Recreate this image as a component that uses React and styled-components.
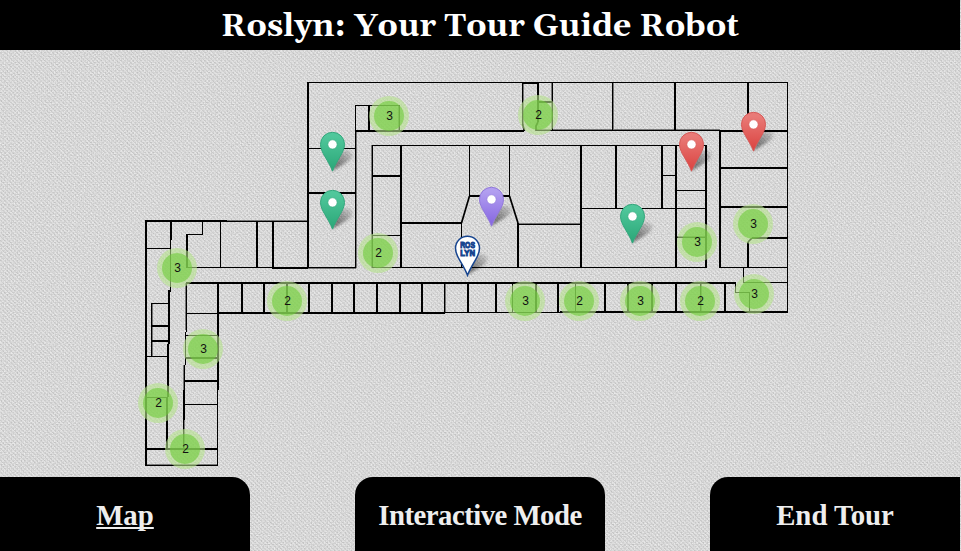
import React from "react";
import styled, { createGlobalStyle, css } from "styled-components";

const GlobalStyle = createGlobalStyle`
  html, body { margin: 0; padding: 0; overflow: hidden; background: #d8d8d8; }
`;

const Page = styled.div`
  position: relative;
  isolation: isolate;
  width: 961px;
  height: 551px;
  overflow: hidden;
`;

const Texture = styled.svg`
  position: absolute;
  inset: 0;
  z-index: -1;
  width: 100%;
  height: 100%;
`;

const Screen = styled.div`
  display: flex;
  flex-direction: column;
  width: 960px;
  height: 100%;
`;

const Header = styled.header`
  flex: none;
  height: 50px;
  background: #000;
  display: flex;
  align-items: center;
  justify-content: center;
`;

const Title = styled.h1`
  margin: 0;
  padding-top: 4px;
  font: bold 32px/46px Gelasio, Georgia, "Liberation Serif", serif;
  color: #fff;
  white-space: nowrap;
`;

const MapArea = styled.main`
  position: relative;
  flex: 1;
`;

const Plan = styled.svg`
  display: block;
  width: 960px;
  height: 427px;
`;

const Cluster = styled.div`
  position: absolute;
  left: ${(p) => p.$x - 20}px;
  top: ${(p) => p.$y - 70}px;
  width: 40px;
  height: 40px;
  box-sizing: border-box;
  padding: 5px;
  border-radius: 50%;
  background: rgba(181, 226, 140, 0.6);
`;

const ClusterCount = styled.span`
  display: block;
  box-sizing: border-box;
  height: 30px;
  border-radius: 50%;
  background: rgba(110, 204, 57, 0.6);
  color: #111;
  font: 12px/30px "Liberation Sans", Arial, sans-serif;
  padding-left: 1px;
  text-align: center;
`;

const PinIcon = styled.svg`
  position: absolute;
  left: ${(p) => p.$x - 14.5}px;
  top: ${(p) => p.$y - 51}px;
  width: 40px;
  height: 44px;
  overflow: visible;
`;

const TabBar = styled.nav`
  flex: none;
  display: flex;
  justify-content: space-between;
  height: 74px;
`;

const corners = {
  left: "0 18px 0 0",
  center: "18px 18px 0 0",
  right: "18px 0 0 0",
};

const Tab = styled.a`
  width: 250px;
  height: 74px;
  background: #000;
  border-radius: ${(p) => corners[p.$side]};
  color: #eee;
  font: bold 28.8px/76px "Liberation Serif", "Times New Roman", serif;
  letter-spacing: ${(p) => (p.$side === "center" ? "-0.54px" : "0")};
  text-align: center;
  white-space: nowrap;
  ${(p) =>
    p.$active &&
    css`
      text-decoration: underline;
      text-decoration-thickness: 2px;
      text-underline-offset: 2px;
      text-decoration-skip-ink: none;
    `}
`;

/* Walls drawn two units thick */
const thickWalls = `
M146 220V466 M145 221H227 M171 221V240 M187 234V268 M257 221V268 M273 221V268
M308 82V268 M272 268H308 M186 283H736 M218 283V390 M242 283V313 M264 283V313
M287 283V313 M309 283V313 M332 283V313 M354 283V313 M377 283V313 M400 283V313
M422 283V313 M468 283V312 M496 283V312 M536 283V312 M558 283V312 M605 283V312
M628 283V312 M652 283V312 M676 283V312 M725 283V312 M218 313H445 M560 312H788
M151 326H169 M151 341H169 M169 290V344 M168 344V397 M167 397V449
M185 358H218 M185 381H218 M184 390V420 M146 449H217
M369 105V131 M355 131H524 M372 176H401 M401 145V267 M308 193H356 M401 223H462
M522 83H538 M538 82V122 M538 102H553 M581 145V267 M616 145V208 M469 196H510 M518 223V267
M675 82V130 M748 82V131 M720 131H788 M720 168H788 M720 207H788 M676 145V267
M706 145V268 M662 145V208 M752 238H788 M748 242V267 M720 131V268
`;

/* Walls drawn one unit thick */
const thinWalls = `
M227 221.5H308 M170.5 240V292 M146 248.5H171 M202.5 221V235 M187 234.5H203
M187 267.5H308 M220.5 221V268 M186.5 283V332 M185.5 332V365 M184.5 365V390 M183.5 420V449
M217.5 390V466 M186 313.5H218 M186 335.5H218 M151.5 303V357 M151 303.5H170 M147 356.5H168
M184 404.5H218 M147 397.5H168 M145 465.5H218
M308 82.5H788 M308 148.5H356 M355.5 105V268 M355 105.5H400 M399.5 105V131
M372 145.5H707 M372.5 145V268 M469.5 145V196 M308 267.5H356 M372 235.5H401
M461.5 223V267 M372 267.5H707 M444.5 283V313 M445 312.5H560 M512.5 283V312 M575.5 283V312
M700.5 283V312 M522.5 82V125 M552.5 82V131 M612.5 82V131 M536 130.5H720
M509.5 145V196 M518 224.5H581 M581 208.5H706 M787.5 82V313 M662 175.5H676
M676 190.5H706 M676 237.5H706 M720 267.5H788 M743.5 267V283 M744 282.5H788 M735.5 283V293
M735 292.5H750 M749.5 293V312
`;

/* Faint second edge beside some thin walls */
const softWalls = `
M356.5 131V268 M536 129.5H720 M613.5 82V131 M551.5 82V131 M523.5 82V125 M227 220.5H308
M518 223.5H581 M308 268.5H356 M445.5 283V313 M152.5 303V357 M146 464.5H218
M398.5 105V131 M701.5 283V312 M676 236.5H706 M185.5 283V330 M183.5 365V390 M184.5 420V449
M371.5 145V268
`;

const slantedWalls = `M469.5 196L461.5 223 M509.5 196L518 223 M522.5 124L524.5 131
M538 122L536 126V131 M752 238L748 242`;

const clusters = [
  [389, 116, 3], [538, 115, 2], [378, 253, 2], [177, 268, 3], [287, 301, 2],
  [203, 349, 3], [158, 403, 2], [185, 449, 2], [525, 301, 3], [579, 301, 2],
  [640, 301, 3], [700, 301, 2], [754, 294, 3], [697, 242, 3], [753, 224, 3],
];

const pins = [
  [332.5, 132, "green"], [332.5, 190, "green"], [632.5, 204, "green"],
  [691.5, 132, "red"], [753.5, 112, "red"], [491.5, 187, "purple"],
  [467.5, 236, "robot"],
];

const pinColors = {
  green: ["#50c79b", "#2eaa7b", "#35a77d"],
  red: ["#e97a77", "#dc4845", "#d65a58"],
  purple: ["#b29ff0", "#8a6be2", "#9279dc"],
  robot: ["#fff", "#fff", "#17458f"],
};

const pinShape =
  "M14 40.2C12.3 35.6 9.5 30.8 6.3 25.4C3.8 21.2 2 17.2 2 13.3A12 12 0 0 1 26 13.3C26 17.2 24.2 21.2 21.7 25.4C18.5 30.8 15.7 35.6 14 40.2Z";

function Pin({ x, y, kind }) {
  const [top, bottom, edge] = pinColors[kind];
  const robot = kind === "robot";
  return (
    <PinIcon $x={x} $y={y} viewBox="-0.5 0 40 44">
      <defs>
        <linearGradient id={`pin-${kind}`} x1="0" y1="0" x2="0" y2="1">
          <stop offset="0.1" stopColor={top} />
          <stop offset="0.9" stopColor={bottom} />
        </linearGradient>
        <linearGradient id="pin-shadow" x1="0" y1="1" x2="0.9" y2="0">
          <stop offset="0" stopColor="#000" stopOpacity="0.6" />
          <stop offset="1" stopColor="#000" stopOpacity="0.08" />
        </linearGradient>
        <filter id="pin-blur" x="-40%" y="-40%" width="180%" height="180%">
          <feGaussianBlur stdDeviation="1.5" />
        </filter>
      </defs>
      <path
        d="M14 40C16 34 17 27 22 22C26 18 34 18 34 24C34 30 22 34 14 40Z"
        fill="url(#pin-shadow)"
        filter="url(#pin-blur)"
      />
      <path d={pinShape} fill={`url(#pin-${kind})`} stroke={edge} strokeWidth={robot ? 1.5 : 1} />
      {robot ? (
        <text
          fill="#17458f"
          stroke="#17458f"
          strokeWidth="1.1"
          fontFamily="Liberation Sans, Arial, sans-serif"
          fontWeight="bold"
          fontSize="9.6"
        >
          <tspan x="6.7" y="13" textLength="14.8" lengthAdjust="spacingAndGlyphs">ROS</tspan>
          <tspan x="6.7" y="21.2" textLength="14.8" lengthAdjust="spacingAndGlyphs">LYN</tspan>
        </text>
      ) : (
        <circle cx="14" cy="13.4" r="4.6" fill="#fff" stroke={edge} strokeWidth="0.6" />
      )}
    </PinIcon>
  );
}

function FloorPlan() {
  return (
    <Plan viewBox="0 50 960 427" fill="none" stroke="#000">
      <g shapeRendering="crispEdges">
        <path d={softWalls} strokeOpacity="0.45" />
        <path d={thickWalls} strokeWidth="2" />
        <path d={thinWalls} />
      </g>
      <path d={slantedWalls} strokeWidth="1.7" />
    </Plan>
  );
}

export default function App() {
  return (
    <>
      <GlobalStyle />
      <Page>
        <Texture aria-hidden="true">
          <defs>
            <filter id="grain" x="0" y="0" width="100%" height="100%" colorInterpolationFilters="sRGB">
              <feTurbulence type="fractalNoise" baseFrequency="0.7 0.9" numOctaves="1" seed="4" />
              <feColorMatrix values="0.22 0 0 0 0.755  0.22 0 0 0 0.755  0.22 0 0 0 0.755  0 0 0 0 1" />
            </filter>
            <pattern id="weave" width="4" height="4" patternUnits="userSpaceOnUse" shapeRendering="crispEdges">
              <path d="M0 .5H2M2 2.5H4M1 1.5H2M3 3.5H4" stroke="#000" strokeOpacity="0.07" />
            </pattern>
          </defs>
          <rect width="961" height="551" filter="url(#grain)" />
          <rect width="961" height="551" fill="url(#weave)" />
        </Texture>
        <Screen>
          <Header>
            <Title>Roslyn: Your Tour Guide Robot</Title>
          </Header>
          <MapArea>
            <FloorPlan />
            {clusters.map(([x, y, n]) => (
              <Cluster key={`${x}-${y}`} $x={x} $y={y}>
                <ClusterCount>{n}</ClusterCount>
              </Cluster>
            ))}
            {pins.map(([x, y, kind]) => (
              <Pin key={`${x}-${y}`} x={x} y={y} kind={kind} />
            ))}
          </MapArea>
          <TabBar>
            <Tab $side="left" $active>Map</Tab>
            <Tab $side="center">Interactive Mode</Tab>
            <Tab $side="right">End Tour</Tab>
          </TabBar>
        </Screen>
      </Page>
    </>
  );
}
